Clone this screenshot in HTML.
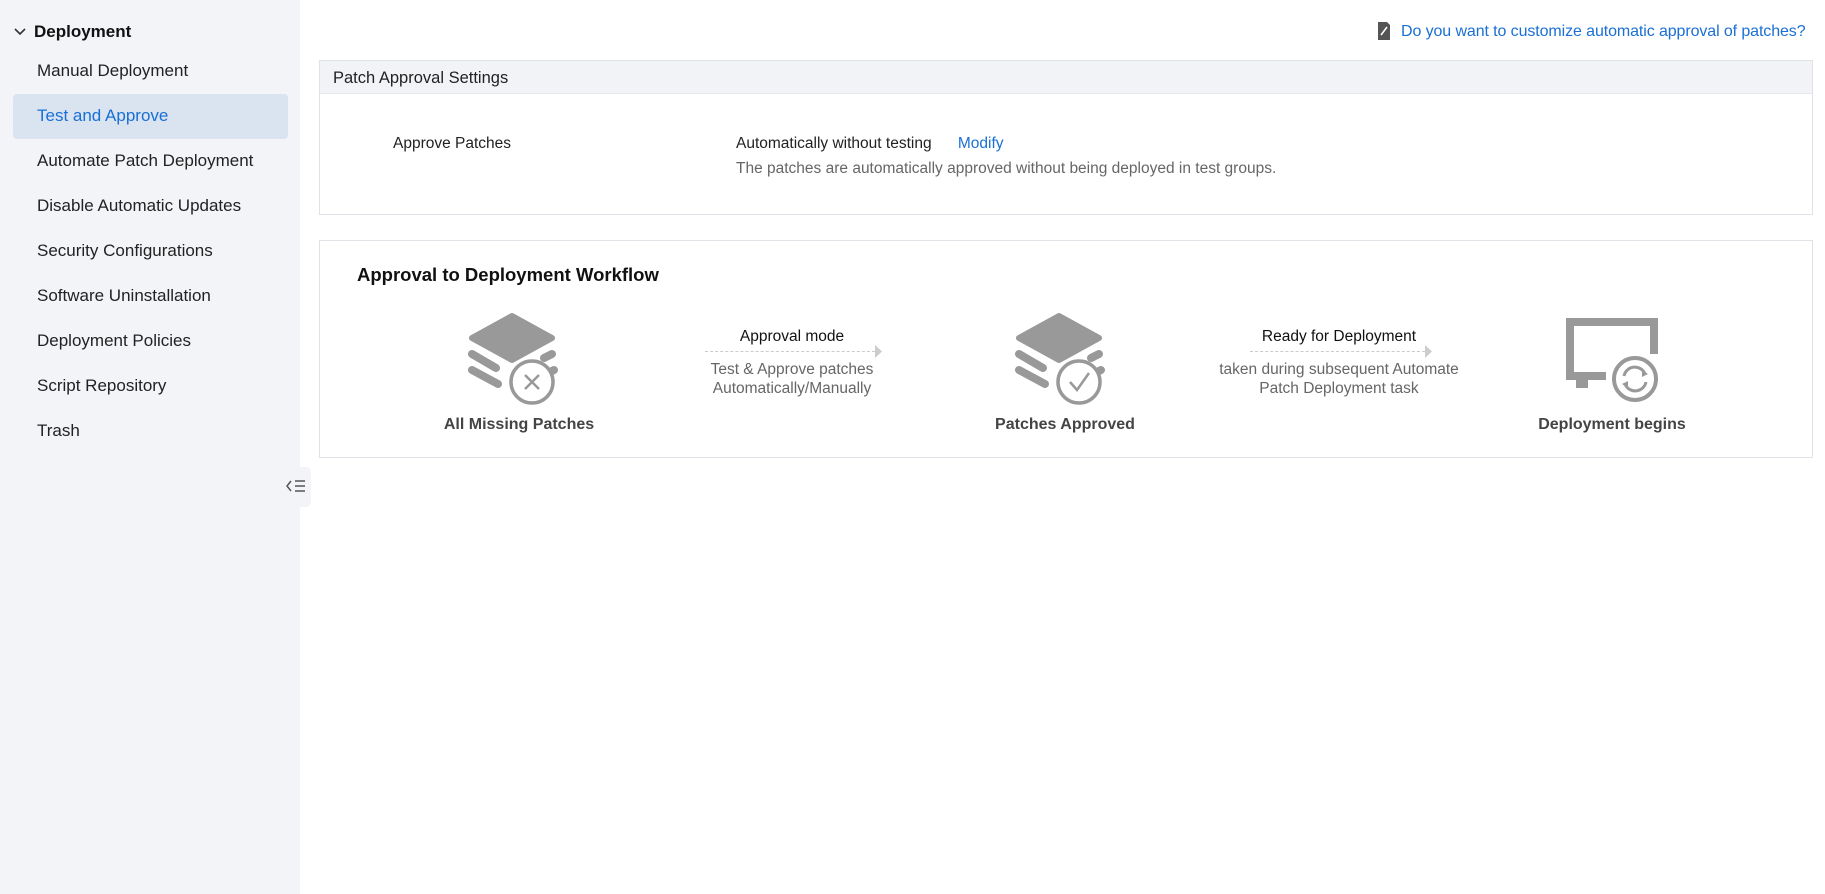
<!DOCTYPE html>
<html><head><meta charset="utf-8"><style>
*{margin:0;padding:0;box-sizing:border-box}
body{width:1825px;height:894px;background:#fff;font-family:"Liberation Sans",sans-serif;color:#222;position:relative;overflow:hidden}
.sb{position:absolute;left:0;top:0;width:300px;height:894px;background:#f2f4f8}
.t{position:absolute;white-space:nowrap}
.nav{position:absolute;left:37px;font-size:17px;color:#222}
.sel{position:absolute;left:13px;top:94px;width:275px;height:45px;background:#d9e4f0;border-radius:4px}
.panel{position:absolute;left:319px;width:1494px;border:1px solid #dfe2e6;background:#fff}
.c{text-align:center;transform:translateX(-50%)}
</style></head><body>
<div class="sb">
<svg style="position:absolute;left:13px;top:27px" width="14" height="10"><path d="M2 2 L7 7 L12 2" fill="none" stroke="#333" stroke-width="1.6"/></svg>
<div class="t" style="left:34px;top:22px;font-size:17px;font-weight:bold;color:#111">Deployment</div>
<div class="sel"></div>
<div class="nav" style="top:61px">Manual Deployment</div>
<div class="nav" style="top:106px;color:#1a6fd4">Test and Approve</div>
<div class="nav" style="top:151px">Automate Patch Deployment</div>
<div class="nav" style="top:196px">Disable Automatic Updates</div>
<div class="nav" style="top:241px">Security Configurations</div>
<div class="nav" style="top:286px">Software Uninstallation</div>
<div class="nav" style="top:331px">Deployment Policies</div>
<div class="nav" style="top:376px">Script Repository</div>
<div class="nav" style="top:421px">Trash</div>
</div>
<div style="position:absolute;left:282px;top:467px;width:29px;height:40px;background:#f2f4f8;border-radius:0 5px 5px 0"></div>
<svg style="position:absolute;left:285px;top:478px" width="22" height="16"><path d="M6 3 L2 8 L6 13" fill="none" stroke="#555" stroke-width="1.5"/><path d="M10 3H20M10 8H20M10 13H20" stroke="#555" stroke-width="1.5"/></svg>

<svg style="position:absolute;left:1376px;top:21px" width="16" height="20"><path d="M2 1h9l3 3v15H2z" fill="#555"/><path d="M5 14 L11 6" stroke="#fff" stroke-width="1.6"/></svg>
<div class="t" style="left:1401px;top:23px;font-size:16px;color:#1a6fd4;letter-spacing:-0.1px">Do you want to customize automatic approval of patches?</div>

<div class="panel" style="top:60px;height:155px">
<div style="height:33px;background:#f2f3f7;border-bottom:1px solid #e6e8ec"></div>
<div class="t" style="left:13px;top:8px;font-size:16.5px;color:#222">Patch Approval Settings</div>
<div class="t" style="left:73px;top:74px;font-size:15.5px">Approve Patches</div>
<div class="t" style="left:416px;top:74px;font-size:15.5px">Automatically without testing <span style="color:#1a6fd4;margin-left:22px">Modify</span></div>
<div class="t" style="left:416px;top:99px;font-size:15.5px;color:#666">The patches are automatically approved without being deployed in test groups.</div>
</div>

<div class="panel" style="top:240px;height:218px">
<div class="t" style="left:37px;top:23px;font-size:18.5px;font-weight:bold;color:#111">Approval to Deployment Workflow</div>
</div>

<svg style="position:absolute;left:468px;top:312px" width="104" height="94" viewBox="0 0 104 94">
<path d="M4 26 L44 4 L84 26 L44 48 Z" fill="#999" stroke="#999" stroke-width="6" stroke-linejoin="round"/>
<path d="M4 42 L28 56" stroke="#999" stroke-width="8" stroke-linecap="round"/>
<path d="M4 58 L30 72" stroke="#999" stroke-width="8" stroke-linecap="round"/>
<path d="M76 46 L84 42" stroke="#999" stroke-width="8" stroke-linecap="round"/>
<path d="M82 60 L86 58" stroke="#999" stroke-width="8" stroke-linecap="round"/>
<circle cx="64" cy="70" r="21" fill="#fff" stroke="#999" stroke-width="3.5"/>
<path d="M57 63 L71 77 M71 63 L57 77" stroke="#999" stroke-width="2.5"/>
</svg>
<svg style="position:absolute;left:1015px;top:312px" width="104" height="94" viewBox="0 0 104 94">
<path d="M4 26 L44 4 L84 26 L44 48 Z" fill="#999" stroke="#999" stroke-width="6" stroke-linejoin="round"/>
<path d="M4 42 L28 56" stroke="#999" stroke-width="8" stroke-linecap="round"/>
<path d="M4 58 L30 72" stroke="#999" stroke-width="8" stroke-linecap="round"/>
<path d="M76 46 L84 42" stroke="#999" stroke-width="8" stroke-linecap="round"/>
<path d="M82 60 L86 58" stroke="#999" stroke-width="8" stroke-linecap="round"/>
<circle cx="64" cy="70" r="21" fill="#fff" stroke="#999" stroke-width="3.5"/>
<path d="M55 70 L62 78 L74 61" fill="none" stroke="#999" stroke-width="2.5"/>
</svg>
<svg style="position:absolute;left:1562px;top:314px" width="100" height="90" viewBox="0 0 100 90">
<path d="M4 4 H96 V40 H88 V12 H12 V58 H44 V66 H4 Z" fill="#999"/>
<rect x="14" y="66" width="12" height="8" fill="#999"/>
<circle cx="73" cy="65" r="21" fill="#fff" stroke="#999" stroke-width="4"/>
<path d="M62 62 A11 11 0 0 1 83 60" fill="none" stroke="#999" stroke-width="3"/>
<path d="M84 68 A11 11 0 0 1 63 70" fill="none" stroke="#999" stroke-width="3"/>
<path d="M80 56 L86 60 L80 63Z M66 74 L60 70 L66 67Z" fill="#999"/>
</svg>

<div class="t c" style="left:519px;top:416px;font-size:16px;font-weight:bold;color:#444">All Missing Patches</div>
<div class="t c" style="left:1065px;top:416px;font-size:16px;font-weight:bold;color:#444">Patches Approved</div>
<div class="t c" style="left:1612px;top:416px;font-size:16px;font-weight:bold;color:#444">Deployment begins</div>

<div class="t c" style="left:792px;top:328px;font-size:15.5px;color:#111">Approval mode</div>
<div style="position:absolute;left:705px;top:351px;width:170px;border-top:1px dashed #ccc"></div>
<svg style="position:absolute;left:875px;top:345px" width="8" height="13"><path d="M0 0 L7 6.5 L0 13Z" fill="#ccc"/></svg>
<div class="t c" style="left:792px;top:360px;font-size:15.5px;color:#666;line-height:19px">Test &amp; Approve patches<br>Automatically/Manually</div>

<div class="t c" style="left:1339px;top:328px;font-size:15.5px;color:#111">Ready for Deployment</div>
<div style="position:absolute;left:1250px;top:351px;width:175px;border-top:1px dashed #ccc"></div>
<svg style="position:absolute;left:1425px;top:345px" width="8" height="13"><path d="M0 0 L7 6.5 L0 13Z" fill="#ccc"/></svg>
<div class="t c" style="left:1339px;top:360px;font-size:15.5px;color:#666;line-height:19px">taken during subsequent Automate<br>Patch Deployment task</div>
</body></html>
